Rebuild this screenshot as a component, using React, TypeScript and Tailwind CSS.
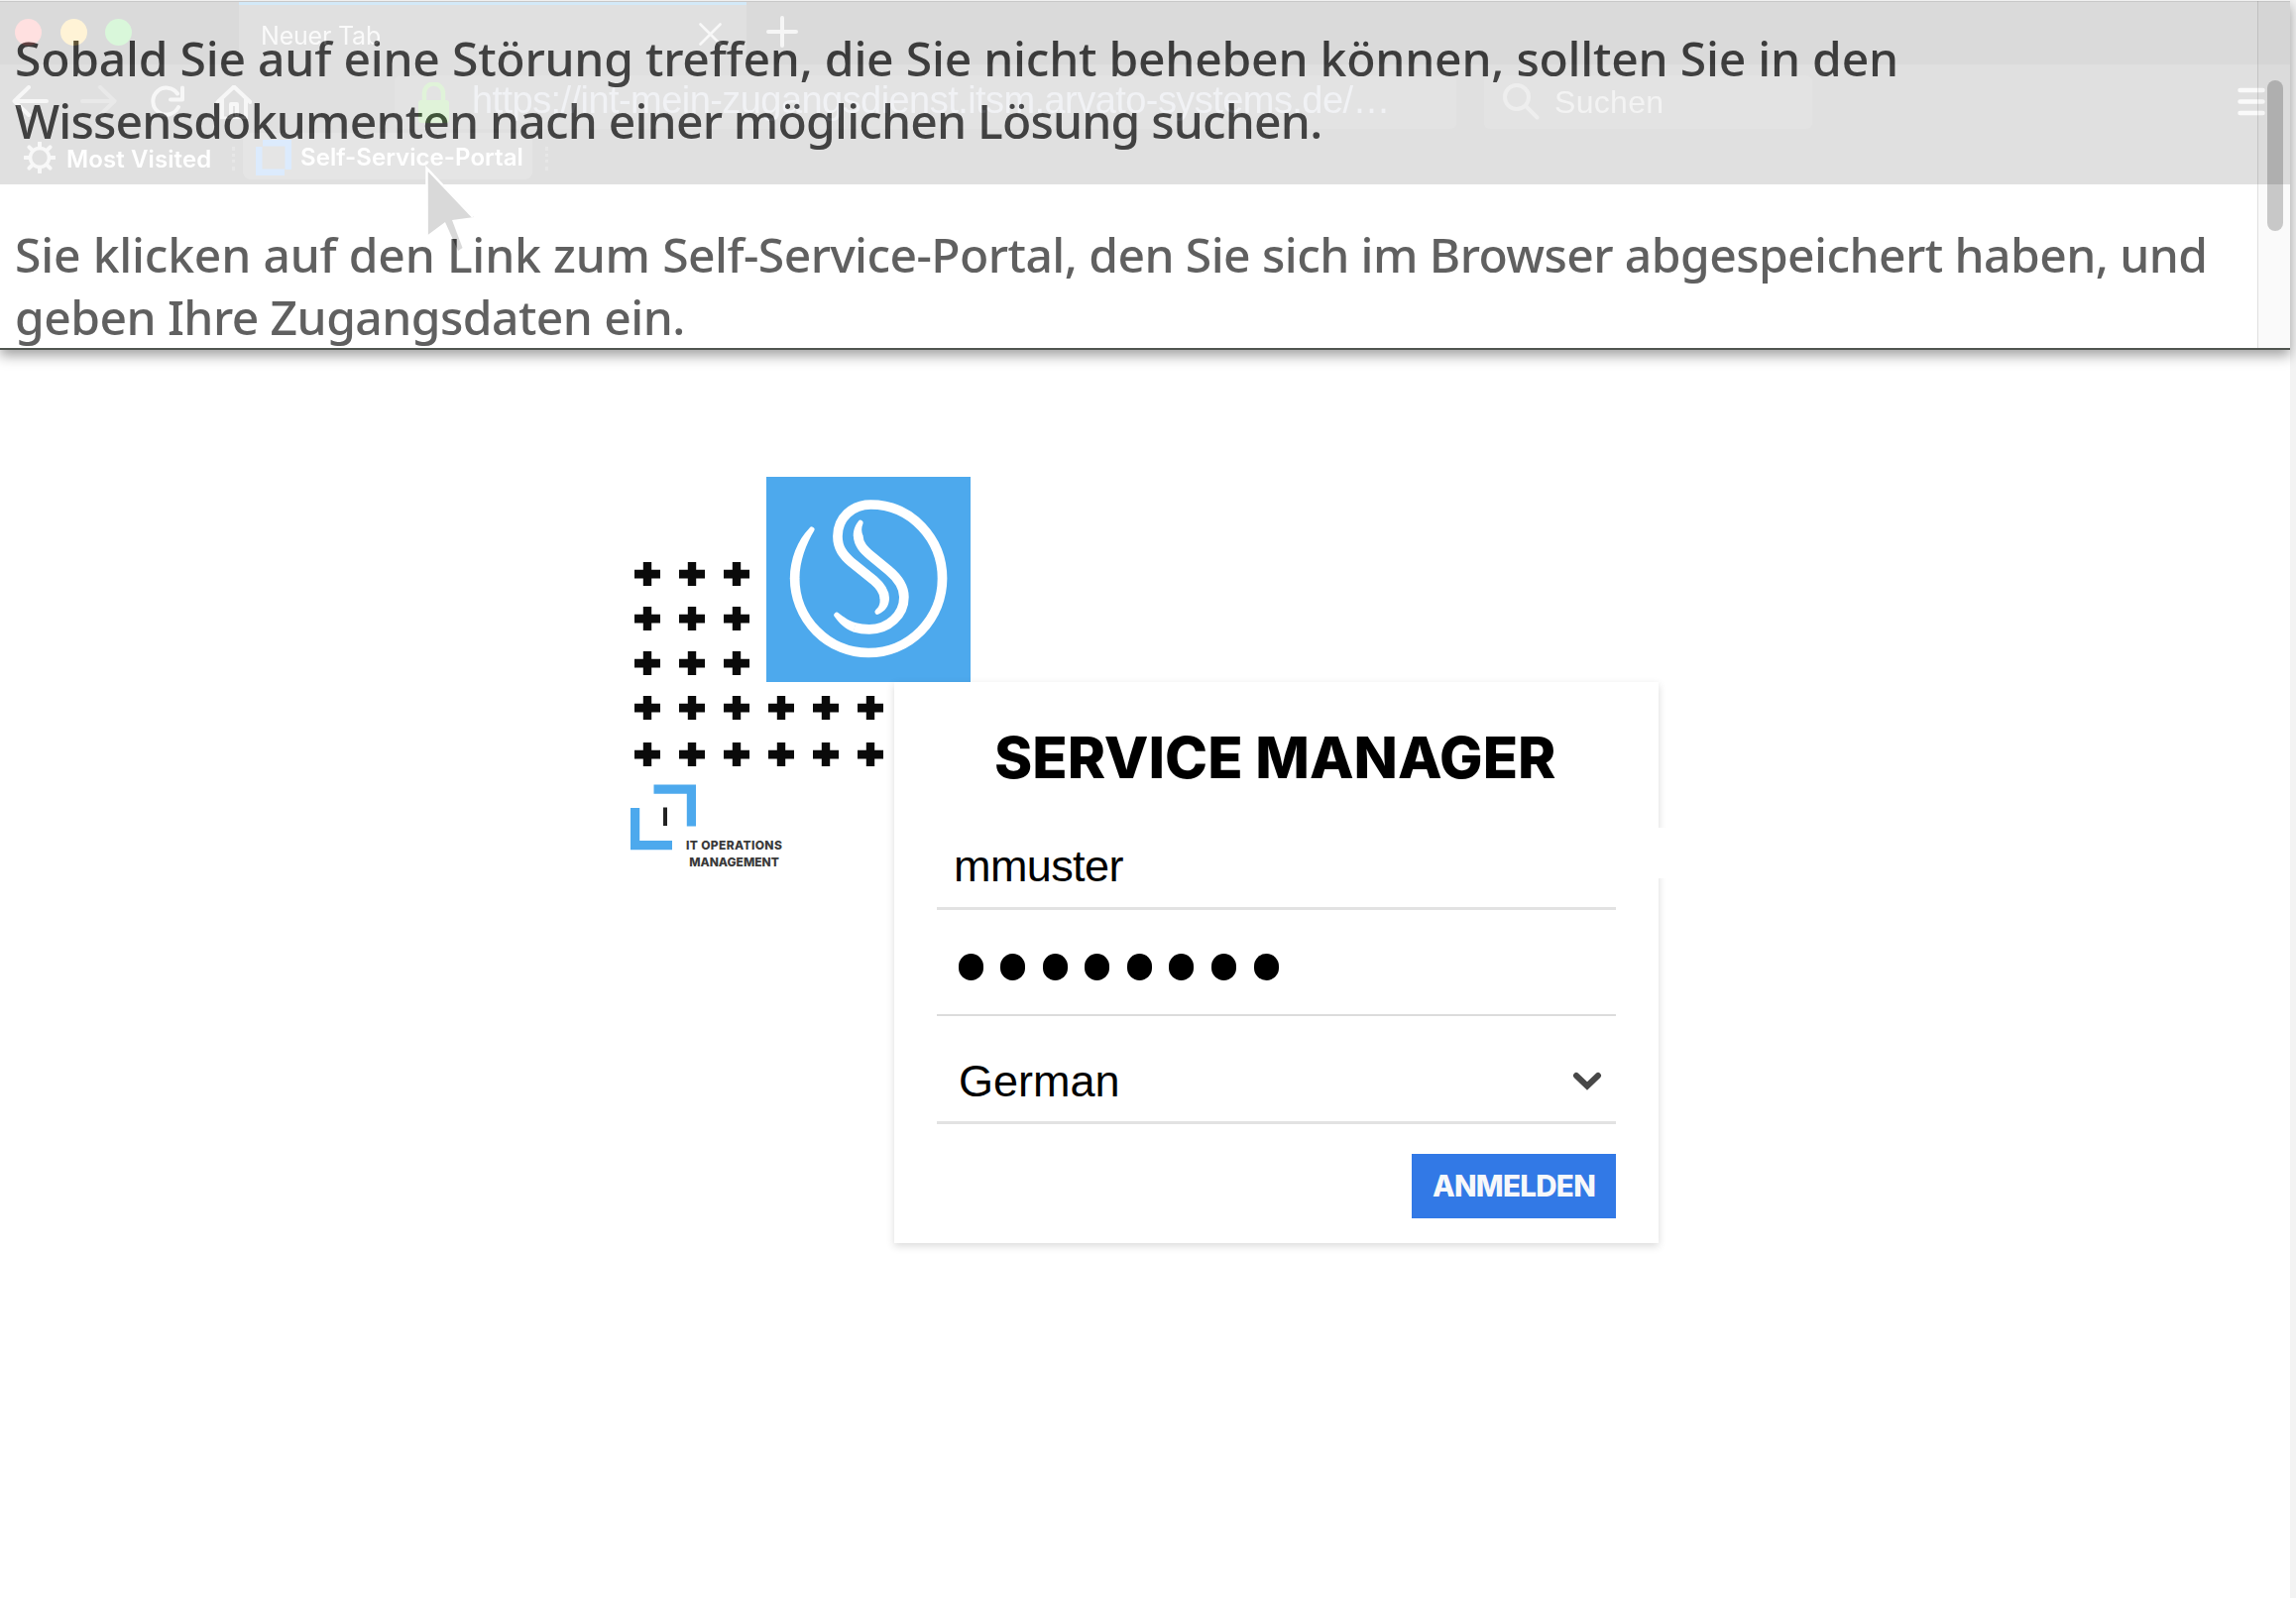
import React from "react";

function TabStrip() {
  return (
    <div className="flex h-[63px] items-stretch bg-[#dadada]">
      <div className="flex w-[241px] gap-[18.5px] pl-[15px] pt-[17px]">
        <span className="size-[27px] rounded-full bg-[#ffe0e0]" />
        <span className="size-[27px] rounded-full bg-[#fff3d6]" />
        <span className="size-[27px] rounded-full bg-[#d9f7da]" />
      </div>
      <div className="flex w-[512px] justify-between border-t-[3px] border-[#d3e9f8] bg-[#e0e0e0] pl-[22px] pr-[25px] font-['Inter',sans-serif] text-[25px] leading-[30px] tracking-[-0.2px] text-[#fafafa]">
        <span className="mt-[16px]">Neuer Tab</span>
        <svg className="mt-[18px] size-[23px]" viewBox="0 0 23 23" fill="none" stroke="#f8f8f8" strokeWidth="2.6" strokeLinecap="round">
          <path d="M1.5 1.5 21.5 21.5M21.5 1.5 1.5 21.5" />
        </svg>
      </div>
      <svg className="ml-[20px] mt-[14px] size-[32px]" viewBox="0 0 32 32" fill="none" stroke="#f6f6f6" strokeWidth="4" strokeLinecap="round">
        <path d="M16 2V30M2 16H30" />
      </svg>
    </div>
  );
}

function Toolbar() {
  return (
    <div className="flex h-[67px] items-start pl-3 pt-[11px] font-['Liberation_Sans',Arial,sans-serif]">
      <svg className="mt-[10px] h-[34px] w-[242px]" viewBox="0 0 242 34" fill="none" stroke="#f7f7f7" strokeWidth="4" strokeLinecap="round" strokeLinejoin="round">
        <path d="M17 2 2.500 16 17 30M3 16H35" />
        <path d="M89 2 103.500 16 89 30M71 16H103" stroke="#e9e9e9" />
        <path d="M167 8.500A13.500 13.500 0 1 0 168 22M172 2.500V14.500H160" />
        <path d="M207.500 17 224 1.500 240.500 17M212 14V33.500H236V14M221 31V19H227V31" />
      </svg>
      <div className="ml-[144px] flex h-[54px] w-[1071px] rounded-md bg-[#e3e3e3] pl-6">
        <svg className="mt-[7px] h-[41px] w-[31px]" viewBox="0 0 31 41">
          <rect y="18" width="31" height="23" rx="3" fill="#e0f3d9" />
          <path d="M6 19V11a9.500 9.500 0 0 1 19 0V19" fill="none" stroke="#e0f3d9" strokeWidth="4.500" />
        </svg>
        <span className="ml-[23px] mt-[6px] whitespace-nowrap text-[38px] leading-[38px] tracking-[-0.56px] text-[#f1f2f5]">https://int-mein-zugangsdienst.itsm.arvato-systems.de/…</span>
      </div>
      <div className="ml-[28px] flex h-[54px] w-[331px] rounded-md bg-[#e3e3e3] pl-[19px]">
        <svg className="mt-[8px] h-[37px] w-[37px]" viewBox="0 0 37 37" fill="none" stroke="#eeeeee" strokeWidth="4" strokeLinecap="round">
          <circle cx="14" cy="14" r="12" />
          <path d="M23 23 34.500 34.500" />
        </svg>
        <span className="ml-[15px] mt-[11px] text-[32px] leading-[32px] tracking-[0.3px] text-[#f3f3f3]">Suchen</span>
      </div>
      <svg className="ml-[429px] mt-[12px] h-[30px] w-[28px]" viewBox="0 0 28 30" fill="none" stroke="#fafafa" strokeWidth="4.500" strokeLinecap="round">
        <path d="M2.500 3H25.500M2.500 14.500H25.500M2.500 26H25.500" />
      </svg>
    </div>
  );
}

const teeth = [0, 45, 90, 135, 180, 225, 270, 315];

function Bookmarks() {
  return (
    <div className="flex h-[54px] items-start pl-[24px] pt-[2px] font-['Inter',sans-serif] text-[24px] font-semibold leading-[30px] text-white">
      <svg className="mt-[9px] size-[32px]" viewBox="0 0 32 32" fill="none" stroke="#f8f8f8" strokeWidth="3.500">
        <circle cx="16" cy="16" r="9.500" />
        {teeth.map((a) => (
          <path key={a} d="M16 6V1" strokeWidth="4" strokeLinecap="round" transform={`rotate(${a} 16 16)`} />
        ))}
      </svg>
      <span className="ml-[11px] mt-[12px] w-[167px] tracking-[0.1px]">Most Visited</span>
      <span className="mt-[14px] h-6 w-0 border-l-[3px] border-dotted border-[#e7e7e7]" />
      <div className="ml-[8px] flex h-[47px] w-[292px] rounded-lg bg-[#e5e5e5] pl-[13px]">
        <svg className="mt-[7px] size-[36px]" viewBox="0 0 36 36" fill="none" stroke="#dcebfd" strokeWidth="6.500">
          <path d="M7 3.250H32.750V30M3.250 7V32.750H29" />
        </svg>
        <span className="ml-[9px] mt-[10px] whitespace-nowrap tracking-[0.05px]">Self-Service-Portal</span>
      </div>
      <span className="ml-[13px] mt-[14px] h-6 w-0 border-l-[3px] border-dotted border-[#e7e7e7]" />
    </div>
  );
}

function Instructions() {
  return (
    <header className="relative isolate h-[353px] w-[2310px] border-b-2 border-[#505550] bg-white shadow-[0_6px_12px_rgba(0,0,0,0.36)]">
      <div className="h-[186px] border-t border-[#f0f0f0] bg-[#e0e0e0]">
        <div className="h-px bg-[#c8c8c8]" />
        <TabStrip />
        <Toolbar />
        <Bookmarks />
      </div>
      <svg className="absolute left-[428px] top-[166px] h-[92px] w-[54px]" viewBox="0 0 54 92">
        <path d="M3 4 50 53 28 56 38.500 84 34 87 21 58 3.500 71Z" fill="#d9d9d9" />
        <path d="M2.500 71V4L49 53" fill="none" stroke="#fff" strokeWidth="2.500" />
      </svg>
      <div className="absolute left-0 top-[27px] flex flex-col gap-[72px] whitespace-nowrap pl-[15px] font-['Noto_Sans',sans-serif] text-[48px] font-medium leading-[63px] text-[#9f9f9f] mix-blend-difference">
        <p>
          <span className="block tracking-[-0.22px]">Sobald Sie auf eine Störung treffen, die Sie nicht beheben können, sollten Sie in den</span>
          <span className="block tracking-[-0.8px]">Wissensdokumenten nach einer möglichen Lösung suchen.</span>
        </p>
        <p>
          <span className="block tracking-[-0.56px]">
            <span className="tracking-[-0.19px]">Sie klicken auf den Link zum </span>
            Self-Service-Portal, den Sie sich im Browser abgespeichert haben, und
          </span>
          <span className="block tracking-[-0.55px]">geben Ihre Zugangsdaten ein.</span>
        </p>
      </div>
      <div className="absolute right-0 top-px h-[350px] w-[33px] border-l border-black/10 bg-black/[0.02]">
        <div className="ml-[9px] mt-20 h-[152px] w-4 rounded-full bg-black/[0.2]" />
      </div>
    </header>
  );
}

function Plus() {
  return (
    <svg className="h-6 w-[26px]" viewBox="0 0 26 24" fill="#0a0a0a">
      <path d="M8.800 0H17.200V7.800H26V16.400H17.200V24H8.800V16.400H0V7.800H8.800Z" />
    </svg>
  );
}

function PlusRow({ count, tall }: { count: number; tall?: boolean }) {
  return (
    <div className={tall ? "flex h-[46.3px] items-center" : "flex h-[44.7px] items-center"}>
      {Array.from({ length: count }, (_, i) => (
        <span key={i} className="flex w-[44.9px] justify-center">
          <Plus />
        </span>
      ))}
    </div>
  );
}

function ItomLogo() {
  return (
    <div className="ml-[5px] mt-[7px] flex">
      <svg className="h-[67px] w-[67px]" viewBox="0 0 67 67" fill="none" stroke="#4da9ed" strokeWidth="9.200">
        <path d="M23.500 5.200H61.400V42.500M4.600 24V61.700H42" />
        <path d="M35 23.500V42" stroke="#222" strokeWidth="4" />
      </svg>
      <div className="-ml-[11px] mt-[53px] w-[97px] text-center font-['Inter',sans-serif] text-[12px] font-extrabold leading-[17.500px] text-[#3a3a3a]">
        <div className="whitespace-nowrap tracking-[0.35px]">IT OPERATIONS</div>
        <div>MANAGEMENT</div>
      </div>
    </div>
  );
}

function ServiceLogo() {
  return (
    <div className="-ml-[129.5px] size-[206.5px] bg-[#4da9ed]">
      <svg className="size-full" viewBox="0 0 620 620" fill="none" stroke="#fff" strokeWidth="29">
        <path d="M86 306A223 227 0 0 0 310 533A223 225 0 0 0 533 308C533 190 440 84 316 84C260 84 216 125 216 180C216 215 232 237 259 260L324 312C345 330 358 350 358 368" />
        <path d="M278 177C279 205 296 222 318 240L370 283C400 308 417 333 417 364C417 418 370 462 312 462C296 462 281 460 267 456" />
        <path
          d="M71.500 308C71.500 250 95 190 130 156A8 8 0 0 1 145 163C120 205 101 255 100.500 308ZM343.500 366C346 385 341 393 331 403A8 8 0 0 0 340 416C360 406 372 392 372.500 366ZM263.500 179C263 160 270 145 279 134A8 8 0 0 1 293 141C287 155 288 165 292.500 179ZM272 442C250 437 235 425 219 413A8 8 0 0 0 207 424C220 443 238 460 264 470Z"
          fill="#fff"
          stroke="none"
        />
      </svg>
    </div>
  );
}

function LoginCard() {
  return (
    <div className="relative h-[566.5px] w-[771px] bg-white pl-[43px] pr-[43px] pt-[47.5px] shadow-[0_3px_8px_rgba(0,0,0,0.15)]">
      <div className="absolute left-[770px] top-[147px] h-[51px] w-[16px] bg-white" />
      <h1 className="whitespace-nowrap pl-[58px] font-['Inter',sans-serif] text-[58px] font-extrabold leading-[58px] text-black">SERVICE MANAGER</h1>
      <div className="flex h-[124.5px] items-end border-b-[3px] border-[#e2e2e2] pb-[19px] pl-[17px] font-['Liberation_Sans',Arial,sans-serif] text-[45px] leading-[45px] tracking-[-0.6px] text-black">mmuster</div>
      <div className="flex h-[107px] items-end gap-[17.6px] border-b-2 border-[#dcdcdc] pb-[34px] pl-[21.5px]">
        {Array.from({ length: 8 }, (_, i) => (
          <span key={i} className="h-[27px] w-[25px] rounded-full bg-black" />
        ))}
      </div>
      <div className="flex h-[109px] items-end justify-between border-b-[3px] border-[#e2e2e2] pb-[18px] pl-[22px] pr-[14px] font-['Liberation_Sans',Arial,sans-serif] text-[45px] leading-[45px] text-black">
        German
        <svg className="mb-[12px] h-[20px] w-[30px]" viewBox="0 0 30 20" fill="none" stroke="#484848" strokeWidth="6" strokeLinecap="round">
          <path d="M4 4 15 14.500 26 4" />
        </svg>
      </div>
      <button className="ml-auto mt-[30px] flex h-[65.5px] w-[206px] items-center justify-center bg-[#3279e6] font-['Inter',sans-serif] text-[29.500px] font-extrabold tracking-[-0.7px] text-[#f7f8fa]">ANMELDEN</button>
    </div>
  );
}

export default function App() {
  return (
    <div className="flex h-[1612px] w-[2316px] overflow-hidden bg-[#f3f3f3]">
      <div className="w-[2310px] bg-white">
        <Instructions />
        <main className="flex pl-[631px] pt-[128px]">
          <div className="w-[271px] pt-[76px]">
            <PlusRow count={3} />
            <PlusRow count={3} />
            <PlusRow count={3} />
            <PlusRow count={6} tall />
            <PlusRow count={6} tall />
            <ItomLogo />
          </div>
          <div>
            <ServiceLogo />
            <LoginCard />
          </div>
        </main>
      </div>
    </div>
  );
}
